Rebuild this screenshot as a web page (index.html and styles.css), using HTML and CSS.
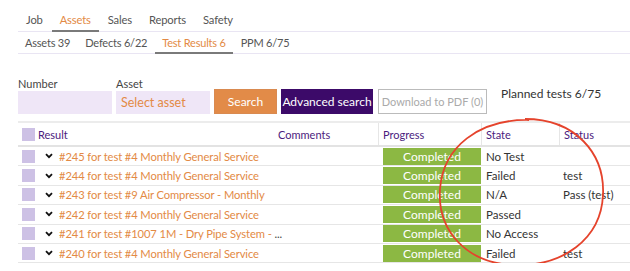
FILE: index.html
```html
<!DOCTYPE html>
<html lang="en">
<head>
    <meta charset="UTF-8">
    <title>Test Results</title>
    <link rel="stylesheet" href="styles.css">
</head>
<body>
    <div class="page">
        <nav class="tabs main-tabs">
            <span class="tab">Job</span>
            <span class="tab active">Assets</span>
            <span class="tab">Sales</span>
            <span class="tab">Reports</span>
            <span class="tab">Safety</span>
        </nav>
        <nav class="tabs sub-tabs">
            <span class="tab">Assets 39</span>
            <span class="tab">Defects 6/22</span>
            <span class="tab active">Test Results 6</span>
            <span class="tab">PPM 6/75</span>
        </nav>

        <div class="search-bar">
            <label class="field">
                <span class="field-label">Number</span>
                <span class="input"></span>
            </label>
            <label class="field">
                <span class="field-label">Asset</span>
                <span class="input placeholder">Select asset</span>
            </label>
            <button class="btn btn-search">Search</button>
            <button class="btn btn-advanced">Advanced search</button>
            <button class="btn btn-pdf">Download to PDF (0)</button>
            <span class="planned">Planned tests 6/75</span>
        </div>

        <div class="results">
            <div class="row head">
                <div class="cell c-result"><span class="check"></span>Result</div>
                <div class="cell c-comments">Comments</div>
                <div class="cell c-progress">Progress</div>
                <div class="cell c-state">State</div>
                <div class="cell c-status">Status</div>
            </div>
            <div id="rows"></div>

            <svg class="ring" width="186" height="160" viewBox="0 0 186 160">
                <path d="M96 6 C146 6 176 40 174 82 C172 126 134 154 84 152 C38 150 8 118 11 76 C14 34 50 6 100 7"
                      fill="none" stroke="#e5432c" stroke-width="1.8"/>
            </svg>
        </div>
    </div>

    <script>
        var tests = [
            ['#245 for test #4 Monthly General Service', 'No Test', ''],
            ['#244 for test #4 Monthly General Service', 'Failed', 'test'],
            ['#243 for test #9 Air Compressor - Monthly', 'N/A', 'Pass (test)'],
            ['#242 for test #4 Monthly General Service', 'Passed', ''],
            ['#241 for test #1007 1M - Dry Pipe System - ', 'No Access', ''],
            ['#240 for test #4 Monthly General Service', 'Failed', 'test']
        ];

        var chevron = '<svg class="chev" width="8" height="6" viewBox="0 0 8 6"><path d="M1 1.2 L4 4.2 L7 1.2" fill="none" stroke="#111" stroke-width="1.8"/></svg>';

        var html = '';
        tests.forEach(function (t, i) {
            var more = i === 4 ? '<span class="more">...</span>' : '';
            html += '<div class="row">'
                + '<div class="cell c-result"><span class="check"></span>' + chevron + '<span class="name">' + t[0] + more + '</span></div>'
                + '<div class="cell c-comments"></div>'
                + '<div class="cell c-progress"><span class="done">Completed</span></div>'
                + '<div class="cell c-state">' + t[1] + '</div>'
                + '<div class="cell c-status">' + t[2] + '</div>'
                + '</div>';
        });
        document.getElementById('rows').innerHTML = html;
    </script>
</body>
</html>
```

FILE: styles.css
```css
body {
    margin: 0;
    font-family: Lato, "Open Sans", sans-serif;
    font-size: 11.5px;
    color: #333;
    background: #fff;
}
.page {
    padding: 11px 0 0 18px;
}
.tabs {
    display: flex;
    gap: 1px;
    border-bottom: 1px solid #e9e5f3;
}
.tab {
    color: #555;
    padding: 2px 8px 4px;
    border-bottom: 2px solid transparent;
    margin-bottom: -1px;
    white-space: nowrap;
    font-size: 11.2px;
    letter-spacing: -0.15px;
}
.tab.active {
    color: #e38a45;
    border-bottom-color: #7a7a7a;
}
.sub-tabs .tab {
    padding: 4px 7px 3px;
    font-size: 11px;
    letter-spacing: -0.2px;
}

.search-bar {
    display: flex;
    align-items: flex-end;
    margin-top: 23px;
}
.field {
    display: flex;
    flex-direction: column;
    margin-right: 4px;
}
.field-label {
    font-size: 11px;
    color: #444;
    margin-bottom: 1px;
}
.input {
    width: 94px;
    height: 23px;
    background: #efe6f7;
    line-height: 24px;
    padding-left: 5px;
    box-sizing: border-box;
    font-size: 12.5px;
}
.placeholder { color: #e38a45; }
.btn {
    height: 25px;
    font-family: inherit;
    font-size: 12px;
    border: 1px solid transparent;
    margin-right: 4px;
    padding: 0;
    white-space: nowrap;
}
.btn-search {
    width: 63px;
    background: #e28b48;
    color: #fff;
    border-color: #d98a50;
}
.btn-advanced {
    width: 92px;
    background: #3c0a69;
    color: #fff;
}
.btn-pdf {
    width: 109px;
    background: #fff;
    color: #aaa;
    border-color: #bbb;
    margin-left: 1px;
    font-size: 11px;
}
.planned {
    align-self: flex-start;
    margin: 9px 0 0 10px;
    font-size: 12px;
    color: #333;
    white-space: nowrap;
}

.results {
    position: relative;
    margin-top: 7px;
    border-top: 2px solid #ececec;
}
.row {
    display: flex;
    height: 19.4px;
    align-items: center;
    border-bottom: 1px solid #e6e6e6;
    box-sizing: border-box;
}
.row.head {
    height: 24px;
    color: #4b1b7e;
    font-size: 11px;
    border-bottom: 2px solid #e3e3e3;
}
.cell {
    display: flex;
    align-items: center;
    height: 100%;
    box-sizing: border-box;
    white-space: nowrap;
    overflow: hidden;
}
.c-result { width: 258px; padding-left: 4px; overflow: visible; }
.c-comments { width: 102px; padding-left: 2px; }
.c-progress { width: 103px; padding-left: 5px; }
.c-state { width: 78px; padding-left: 5px; }
.c-status { flex: 1; padding-left: 4px; }
.head .c-progress,
.head .c-state,
.head .c-status { border-left: 1px solid #e6e6e6; padding-left: 4px; }
.check {
    width: 13px;
    height: 13px;
    background: #cdc1e5;
    margin-right: 3px;
    flex: none;
}
.chev {
    margin: 0 6px 0 7px;
    flex: none;
}
.name {
    color: #e38a45;
    font-size: 11.2px;
    letter-spacing: -0.1px;
}
.more { color: #444; }
.done {
    display: block;
    width: 98px;
    height: 17px;
    line-height: 17px;
    background: #8cb843;
    color: #fff;
    font-size: 12px;
    text-align: center;
}
.ring {
    position: absolute;
    left: 411px;
    top: -10px;
    pointer-events: none;
}
```
